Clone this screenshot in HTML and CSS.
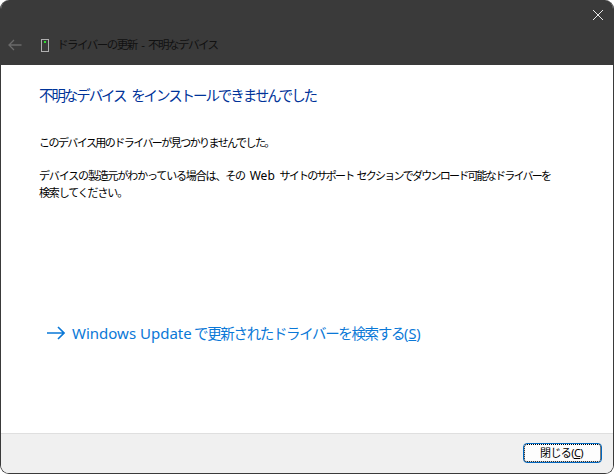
FILE: index.html
```html
<!DOCTYPE html>
<html lang="ja">
<head>
<meta charset="utf-8">
<title>ドライバーの更新</title>
<link rel="stylesheet" href="styles.css">
</head>
<body>
<div class="window">
  <header class="titlebar">
    <div class="close-row">
      <svg class="close" width="10" height="10" viewBox="0 0 10 10"><path d="M0 0L10 10M10 0L0 10" stroke="#e8e8e8" stroke-width="1" fill="none"/></svg>
    </div>
    <div class="nav-row">
      <svg class="back" width="14" height="12" viewBox="0 0 14 12"><path d="M13.5 6H1M6 1L1 6l5 5" stroke="#6a6a6a" stroke-width="1.3" fill="none"/></svg>
      <svg class="device" width="8" height="13" viewBox="0 0 8 13"><rect x="0.5" y="0.5" width="7" height="12" fill="#3a3a3a" stroke="#b0b0b0"/><rect x="3" y="2" width="2" height="2" fill="#2fe02f"/></svg>
      <span class="title">ドライバーの更新 - 不明なデバイス</span>
    </div>
  </header>
  <main class="content">
    <h1 class="heading">不明なデバイス をインストールできませんでした</h1>
    <p class="msg first">このデバイス用のドライバーが見つかりませんでした。</p>
    <p class="msg">デバイスの製造元がわかっている場合は、その <span class="latin">Web</span> <span class="tail">サイトのサポート セクションでダウンロード可能なドライバーを</span><br>検索してください。</p>
    <div class="spacer"></div>
    <a class="link" href="#">
      <svg class="arrow" width="18" height="14" viewBox="0 0 18 14"><path d="M0 7H17M11 1l6 6-6 6" stroke="#0a78d7" stroke-width="1.6" fill="none"/></svg>
      <span class="link-text"><span class="latin">Windows Update</span> で更新されたドライバーを検索する<span class="key">(<u>S</u>)</span></span>
    </a>
  </main>
  <footer class="footer">
    <button class="btn" type="button">閉じる(<u>C</u>)</button>
  </footer>
</div>
</body>
</html>
```
FILE: styles.css
```css
* { box-sizing: border-box; }
html, body { margin: 0; padding: 0; background: #fff; }
body { width: 614px; height: 475px; font-family: "Noto Sans", "Noto Sans CJK JP", sans-serif; }
.window {
  width: 614px; height: 474px;
  display: flex; flex-direction: column;
  border: solid #3a3a3a; border-width: 0 1px 1px 1px;
  border-radius: 9px;
  overflow: hidden;
  background: #fff;
}
.titlebar { height: 65px; background: #3a3a3a; flex: none; display: flex; flex-direction: column; }
.close-row { height: 30px; display: flex; justify-content: flex-end; align-items: flex-start; padding: 10px 10px 0 0; }
.nav-row { display: flex; align-items: center; height: 30px; padding-left: 7px; }
.back { margin-right: 19px; }
.device { margin-right: 8px; }
.title { font-size: 11.5px; letter-spacing: -1.5px; word-spacing: 3px; color: #111; line-height: 16px; }
.content { flex: 1; display: flex; flex-direction: column; padding: 0 0 0 38px; }
.heading { margin: 20px 0 0; font-size: 14.5px; letter-spacing: -2.08px; word-spacing: 4px; font-weight: 400; color: #003399; line-height: 20px; }
.msg { margin: 0; font-size: 11px; letter-spacing: -1.15px; word-spacing: 3px; line-height: 17px; color: #000; white-space: nowrap; }
.msg.first { margin-top: 29px; margin-bottom: 16px; letter-spacing: -1.55px; }
.latin { letter-spacing: 0; }
.msg .latin { font-size: 12px; }
.msg .tail { letter-spacing: -1.76px; word-spacing: 2px; }
.spacer { flex: 1; }
.link { display: flex; align-items: center; text-decoration: none; color: #0a78d7; font-size: 14.5px; line-height: 20px; margin: 0 0 90px 8px; }
.link-text { letter-spacing: -1.36px; }
.link-text .latin { font-size: 15px; letter-spacing: 0; }
.link-text .key { letter-spacing: 0; }
.arrow { margin-right: 7px; }
.footer { height: 40px; flex: none; background: #f0f0f0; border-top: 1px solid #dfdfdf; display: flex; justify-content: flex-end; padding: 9px 11px 0 0; }
.btn { width: 79px; height: 20px; padding: 0 2px 0 0; background: #fdfdfd; border: 1px solid #0067c0; border-radius: 4px; outline: 1px dotted #000; outline-offset: -2px; font: inherit; font-size: 11px; letter-spacing: -0.6px; line-height: 16px; color: #000; }
```
